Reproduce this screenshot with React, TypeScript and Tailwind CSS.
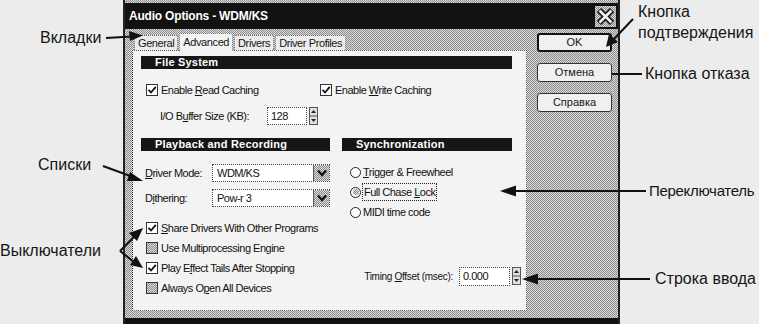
import React from 'react'

const dither = 'bg-[image:repeating-conic-gradient(#8c8c8c_0_25%,#dadada_0_50%)] bg-[length:2px_2px]'

function U({ children }: { children: React.ReactNode }) {
  return <span className="underline underline-offset-1">{children}</span>
}

function Check({ checked }: { checked: boolean }) {
  return (
    <span
      className={`w-[12px] h-[12px] shrink-0 border border-[#333] flex items-center justify-center ${
        checked ? 'bg-white' : dither
      }`}
    >
      {checked && (
        <svg width="10" height="10" viewBox="0 0 10 10">
          <path d="M1.5 4.8 L4 7.5 L8.8 1.8" fill="none" stroke="#111" strokeWidth="1.8" />
        </svg>
      )}
    </span>
  )
}

function CheckRow({ checked, children }: { checked: boolean; children: React.ReactNode }) {
  return (
    <div className="h-[14px] flex items-center gap-[3px]">
      <Check checked={checked} />
      <span>{children}</span>
    </div>
  )
}

function Radio({ on, children }: { on?: boolean; children: React.ReactNode }) {
  return (
    <div className="h-[16px] flex items-center gap-[2px]">
      <span className="w-[11px] h-[11px] shrink-0 rounded-full border border-[#222] bg-white flex items-center justify-center">
        {on && <span className={`w-[6px] h-[6px] rounded-full bg-[#222] ${dither}`} />}
      </span>
      <span className={on ? 'outline outline-1 outline-dotted outline-[#222] px-[1px]' : ''}>{children}</span>
    </div>
  )
}

function Spin() {
  return (
    <span className="w-[9px] h-[18px] shrink-0 ml-[2px] flex items-center justify-center">
      <svg width="9" height="18" viewBox="0 0 9 18">
        <rect x="0.5" y="0.5" width="8" height="17" fill="#e0e0e0" stroke="#555" />
        <path d="M4.5 3 L2 6 H7 Z" fill="#222" />
        <path d="M1 9 H8" stroke="#555" />
        <path d="M4.5 15 L2 12 H7 Z" fill="#222" />
      </svg>
    </span>
  )
}

function Select({ value }: { value: string }) {
  return (
    <div className="w-[118px] h-[18px] border border-dotted border-[#444] bg-white flex items-center">
      <span className="flex-1 pl-[4px]">{value}</span>
      <span className={`w-[16px] h-full flex items-center justify-center border-l border-[#555] ${dither}`}>
        <svg width="10" height="8" viewBox="0 0 10 8">
          <path d="M1 1.5 L5 6 L9 1.5" fill="none" stroke="#111" strokeWidth="2.2" />
        </svg>
      </span>
    </div>
  )
}

function Header({ w, children }: { w: string; children: React.ReactNode }) {
  return (
    <div className={`${w} h-[13px] bg-[#161616] text-white font-bold text-[11px] leading-[13px] pl-[14px] tracking-[0.2px]`}>
      {children}
    </div>
  )
}

function Button({ children, strong }: { children: React.ReactNode; strong?: boolean }) {
  return (
    <div
      className={`w-[75px] h-[19px] rounded-[3px] bg-[#f0f0f0] flex items-center justify-center text-[11px] ${
        strong ? 'border-2 border-[#111]' : 'border-[1.5px] border-[#333]'
      }`}
    >
      {children}
    </div>
  )
}

function Tab({ active, children }: { active?: boolean; children: React.ReactNode }) {
  return (
    <div
      className={`px-[3px] flex items-center border border-b-0 border-[#666] rounded-t-[2px] border-dotted ${
        active ? 'h-[18px] bg-[#f4f4f4] -mb-[1px] z-10' : 'h-[15px] bg-[#ececec]'
      }`}
    >
      {children}
    </div>
  )
}

function Dialog() {
  return (
    <div className={`w-[497px] h-[324px] shrink-0 flex flex-col border-x-2 border-[#222] pt-[3px] ${dither}`}>
      {/* title */}
      <div className="h-[26px] bg-[#121212] flex items-center justify-between pl-[4px] pr-[1px]">
        <span className="text-white font-bold text-[12px] tracking-[-0.2px]">Audio Options - WDM/KS</span>
        <span className={`w-[23px] h-[23px] border border-[#111] flex items-center justify-center ${dither}`}>
          <svg width="19" height="19" viewBox="0 0 19 19">
            <path d="M3 3 L16 16 M16 3 L3 16" stroke="#111" strokeWidth="6" />
            <path d="M3.5 3.5 L15.5 15.5 M15.5 3.5 L3.5 15.5" stroke="#f2f2f2" strokeWidth="2.6" />
          </svg>
        </span>
      </div>

      <div className="flex-1 flex">
        {/* tabs + page */}
        <div className="pl-[7px] flex flex-col">
          <div className="h-[21px] flex items-end pl-[2px] gap-[1px] text-[11px] tracking-[-0.4px]">
            <Tab>General</Tab>
            <Tab active>Advanced</Tab>
            <Tab>Drivers</Tab>
            <Tab>Driver Profiles</Tab>
          </div>
          <div className="w-[395px] h-[261px] bg-[#f3f3f3] border border-dotted border-[#555] border-l-[#222] flex flex-col pl-[8px] pt-[5px] text-[11px] tracking-[-0.5px] text-[#111]">
            <Header w="w-[371px]">File System</Header>

            <div className="mt-[14px] flex pl-[5px]">
              <div className="w-[174px]">
                <CheckRow checked>
                  Enable <U>R</U>ead Caching
                </CheckRow>
              </div>
              <CheckRow checked>
                Enable <U>W</U>rite Caching
              </CheckRow>
            </div>

            <div className="mt-[10px] flex items-center pl-[19px] h-[18px]">
              <span className="w-[107px]">
                I/O B<U>u</U>ffer Size (KB):
              </span>
              <span className="w-[40px] h-[18px] border border-dotted border-[#444] bg-white pl-[3px] flex items-center">128</span>
              <Spin />
            </div>

            <div className="mt-[13px] flex gap-[12px]">
              <Header w="w-[189px]">Playback and Recording</Header>
              <Header w="w-[170px]">Synchronization</Header>
            </div>

            <div className="flex gap-[12px]">
              <div className="w-[189px] pl-[4px] pt-[13px] flex flex-col gap-[7px]">
                <div className="flex items-center">
                  <span className="w-[67px]">
                    <U>D</U>river Mode:
                  </span>
                  <Select value="WDM/KS" />
                </div>
                <div className="flex items-center">
                  <span className="w-[67px]">
                    D<U>i</U>thering:
                  </span>
                  <Select value="Pow-r 3" />
                </div>
              </div>
              <div className="pl-[8px] pt-[13px] flex flex-col gap-[4px]">
                <Radio>
                  <U>T</U>rigger &amp; Freewheel
                </Radio>
                <Radio on>
                  Full Chase <U>L</U>ock
                </Radio>
                <Radio>MIDI time code</Radio>
              </div>
            </div>

            <div className="flex">
              <div className="w-[215px] pl-[5px] pt-[1px] flex flex-col gap-[6px]">
                <CheckRow checked>
                  <U>S</U>hare Drivers With Other Programs
                </CheckRow>
                <CheckRow checked={false}>Use Multiprocessing Engine</CheckRow>
                <CheckRow checked>
                  Play E<U>f</U>fect Tails After Stopping
                </CheckRow>
                <CheckRow checked={false}>
                  Always O<U>p</U>en All Devices
                </CheckRow>
              </div>
              <div className="flex-1 pt-[47px] pr-[5px] flex items-start justify-end">
                <span className="h-[19px] pr-[6px] flex items-center whitespace-pre text-[10px] tracking-[-0.3px]">
                  {'Timing '}
                  <U>O</U>
                  {'ffset (msec):'}
                </span>
                <span className="w-[51px] h-[19px] border border-dotted border-[#444] bg-white pl-[3px] flex items-center">0.000</span>
                <Spin />
              </div>
            </div>
          </div>
        </div>

        {/* buttons */}
        <div className="pl-[10px] pt-[4px] flex flex-col gap-[11px]">
          <Button strong>OK</Button>
          <Button>Отмена</Button>
          <Button>Справка</Button>
        </div>
      </div>
      <div className="h-[6px] bg-[#111]" />
    </div>
  )
}

function Arrows() {
  return (
    <svg className="absolute inset-0 pointer-events-none" width="759" height="324" viewBox="0 0 759 324">
      <g stroke="#111" strokeWidth="2" fill="#111">
        {/* Вкладки */}
        <line x1="106" y1="38" x2="132" y2="36.5" />
        <polygon points="143,35.5 129,31 130,41" stroke="none" />
        {/* Списки */}
        <line x1="103" y1="166" x2="133" y2="177" />
        <polygon points="143,181 130,172 127,181" stroke="none" />
        {/* Выключатели */}
        <line x1="120" y1="251" x2="135" y2="236" />
        <polygon points="143,228 129,233 137,241" stroke="none" />
        <line x1="120" y1="251" x2="134" y2="262" />
        <polygon points="143,268 136,256 130,265" stroke="none" />
        {/* Кнопка подтверждения */}
        <line x1="633" y1="19" x2="614" y2="39" />
        <polygon points="606,47 609,34 618,42" stroke="none" />
        {/* Кнопка отказа */}
        <line x1="612" y1="74" x2="642" y2="74" />
        {/* Переключатель */}
        <line x1="512" y1="191" x2="646" y2="191" />
        <polygon points="500,191 516,185.5 516,196.5" stroke="none" />
        {/* Строка ввода */}
        <line x1="534" y1="279" x2="650" y2="279" />
        <polygon points="522,279 538,273.5 538,284.5" stroke="none" />
      </g>
    </svg>
  )
}

export default function App() {
  return (
    <div className="relative w-[759px] h-[324px] overflow-hidden bg-[#ececec] flex text-[#151515] font-['Liberation_Sans',Arial,sans-serif]">
      {/* left annotations */}
      <div className="w-[123px] shrink-0 flex flex-col text-[16px] leading-[18px]">
        <span className="mt-[29px] pl-[40px]">Вкладки</span>
        <span className="mt-[109px] pl-[38px]">Списки</span>
        <span className="mt-[68px] pl-[0px]">Выключатели</span>
      </div>

      <Dialog />

      {/* right annotations */}
      <div className="flex-1 min-w-0 flex flex-col text-[16px] leading-[18px] whitespace-nowrap">
        <span className="mt-[3px] pl-[18px]">Кнопка</span>
        <span className="mt-[3px] pl-[18px]">подтверждения</span>
        <span className="mt-[23px] pl-[25px]">Кнопка отказа</span>
        <span className="mt-[99px] pl-[29px] text-[15px] tracking-[-0.3px]">Переключатель</span>
        <span className="mt-[70px] pl-[35px]">Строка ввода</span>
      </div>

      <Arrows />
    </div>
  )
}
